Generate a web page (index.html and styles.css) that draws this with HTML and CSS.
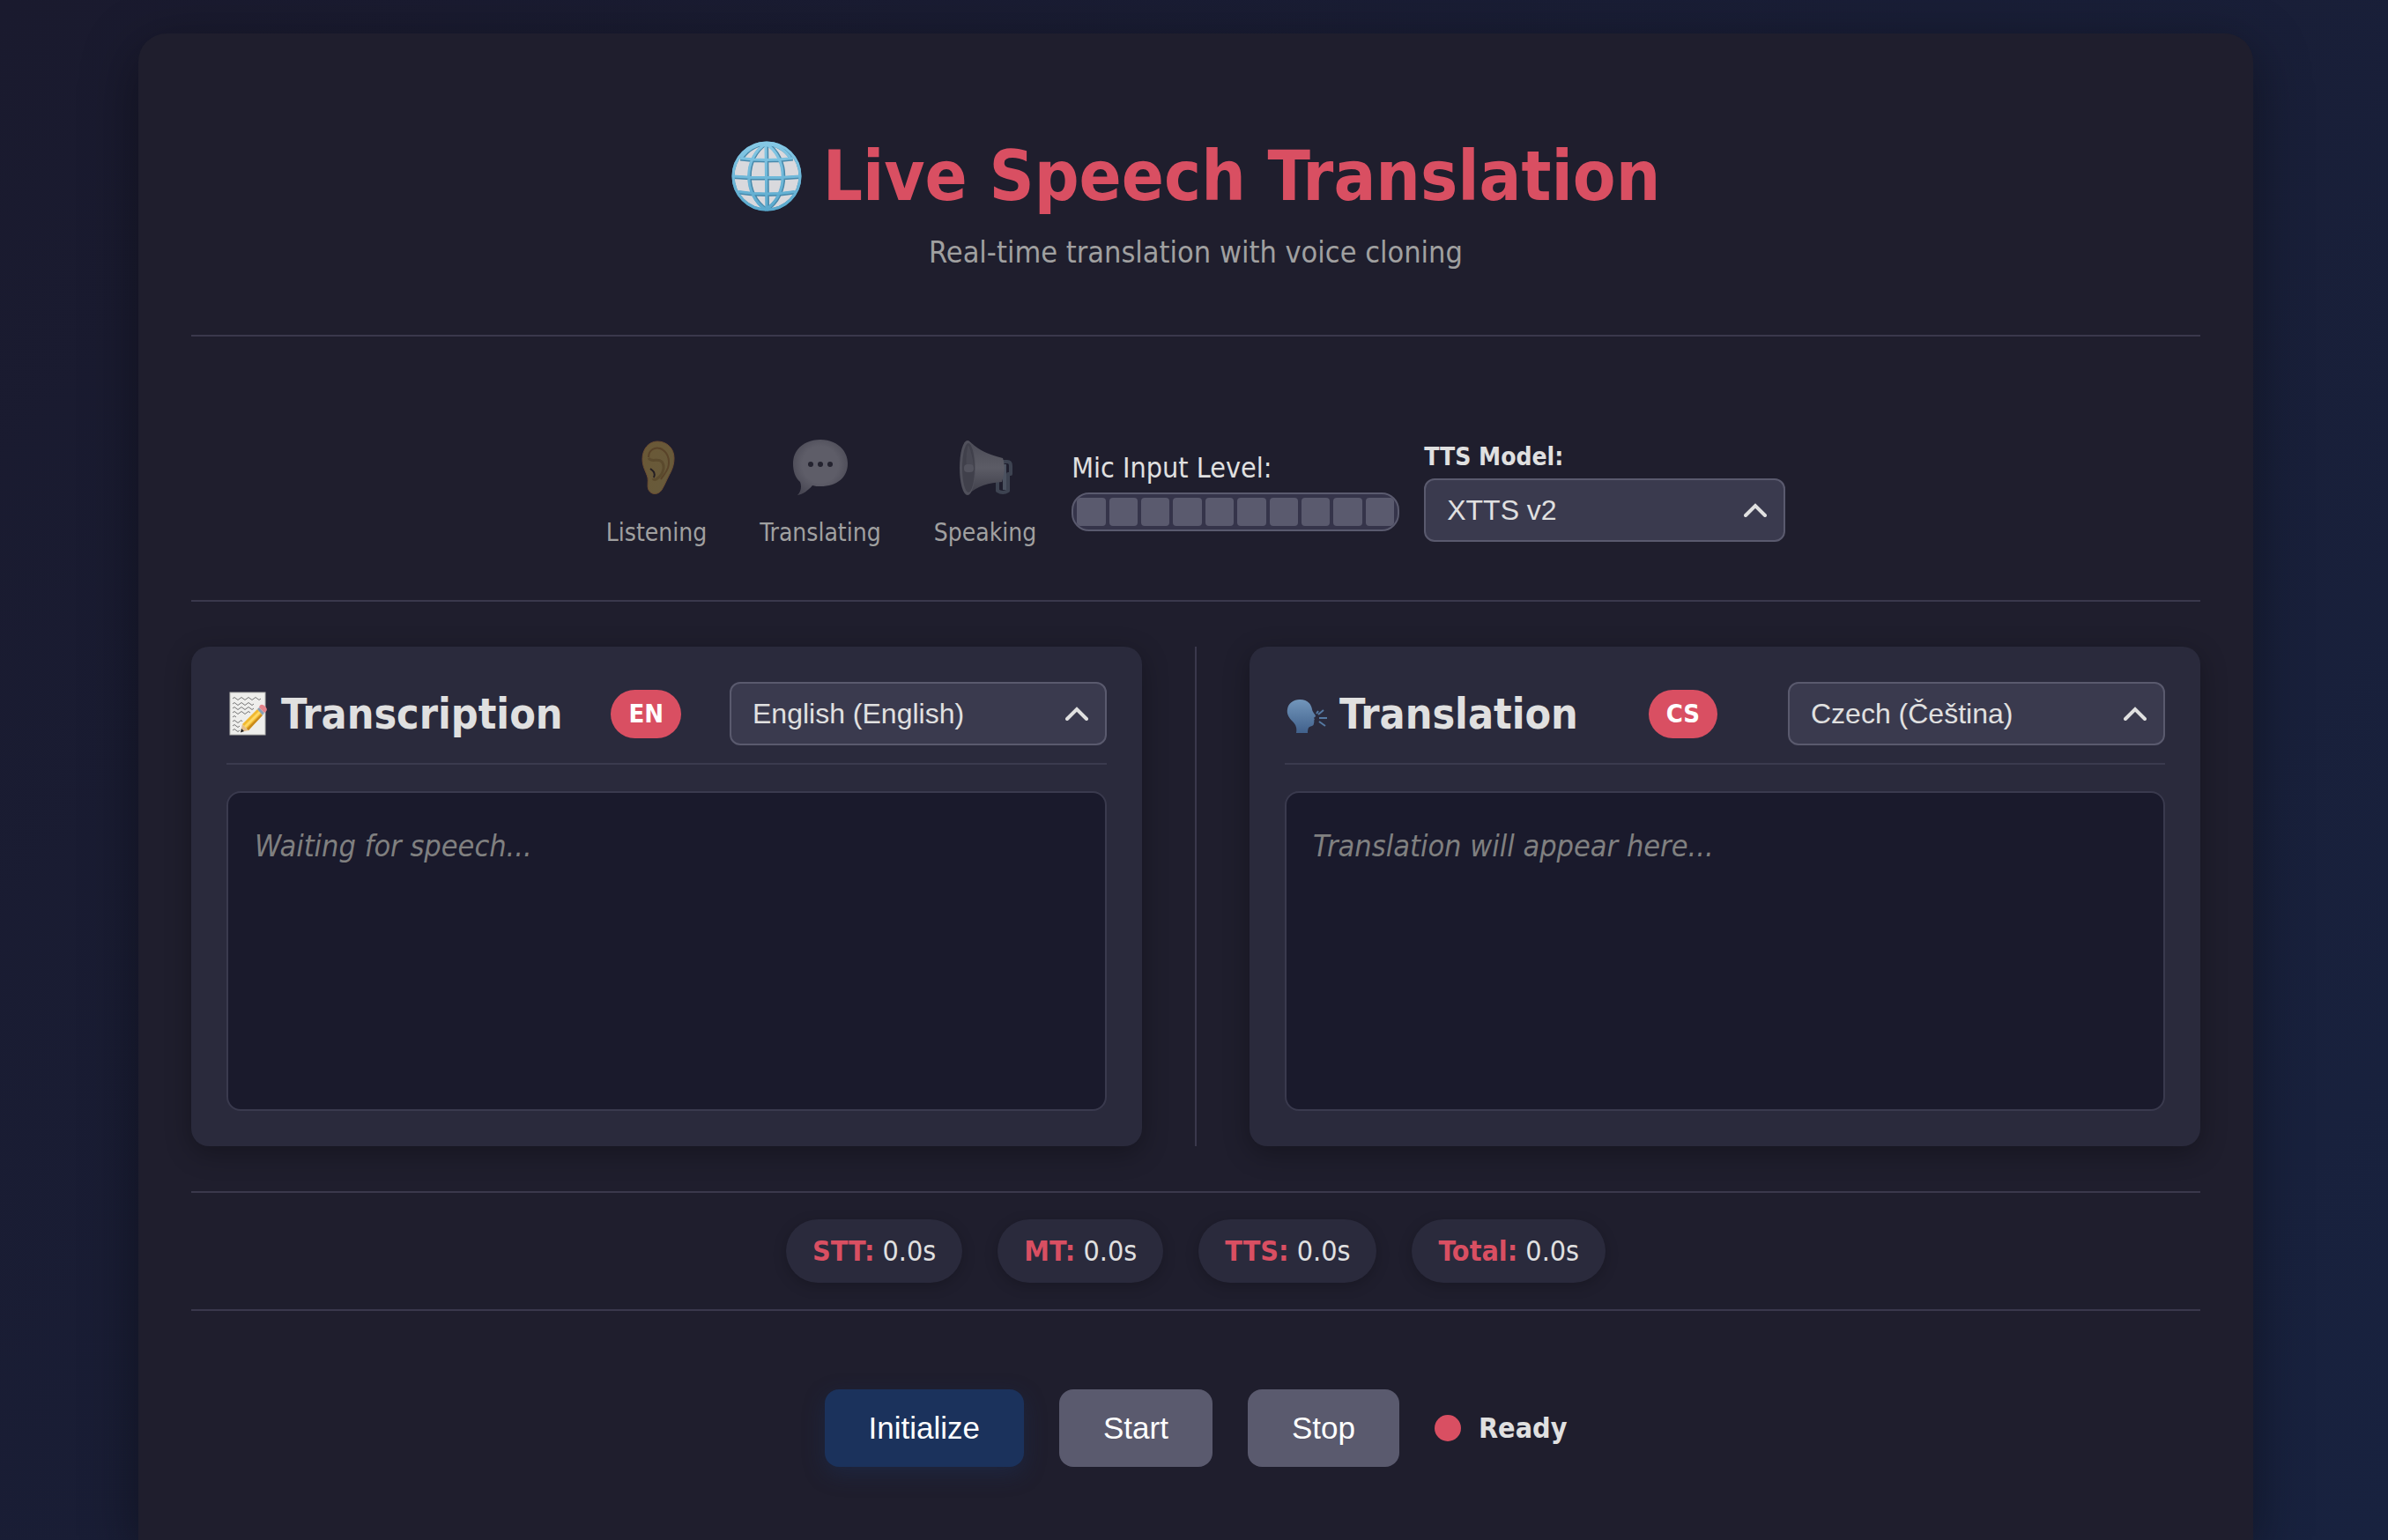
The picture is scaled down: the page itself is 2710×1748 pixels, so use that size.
FILE: index.html
```html
<!DOCTYPE html>
<html lang="en">
<head>
<meta charset="utf-8">
<title>Live Speech Translation</title>
<link rel="stylesheet" href="styles.css">
</head>
<body>
<div class="container">
  <header class="header">
    <h1 class="title">
      <svg class="icon-globe" viewBox="0 0 78 78" aria-hidden="true">
        <defs>
          <linearGradient id="globeLine" x1="0" y1="0" x2="0" y2="1"><stop offset="0" stop-color="#86c9e6"/><stop offset="1" stop-color="#5aa9cd"/></linearGradient>
        </defs>
        <circle cx="39" cy="39" r="37" fill="#d9d9dd"/>
        <g fill="none" stroke="#4789ab" stroke-width="4">
          <circle cx="39" cy="39" r="37" stroke-width="3"/>
          <path d="M39 2L40 76M39 3C14 18 14 60 39 76M39 3C64 18 64 60 39 76M2 40Q39 43 76 40M10 20Q39 24 68 20M8 57Q39 62 70 57M12 19C19 9 28 4 39 3M66 19C59 9 50 4 39 3"/>
        </g>
        <g fill="none" stroke="url(#globeLine)" stroke-width="3">
          <circle cx="39" cy="39" r="37" stroke-width="3"/>
          <path d="M38 2L39 76M38 3C13 18 13 60 38 76M38 3C63 18 63 60 38 76M2 39Q39 42 76 39M10 19Q39 23 68 19M8 56Q39 61 70 56M11 18C18 9 28 4 38 3M65 18C58 9 50 4 38 3"/>
        </g>
      </svg>
      <span>Live Speech Translation</span>
    </h1>
    <p class="subtitle">Real-time translation with voice cloning</p>
  </header>

  <section class="status-row">
    <div class="stages">
      <div class="stage">
        <svg class="stage-icon" viewBox="0 0 72 72" aria-hidden="true">
          <defs><linearGradient id="ear" x1="0" y1="0" x2="1" y2="1"><stop offset="0" stop-color="#6a5836"/><stop offset="1" stop-color="#675b3c"/></linearGradient></defs>
          <path d="M37 6C27 6 20 15 20 26C20 35 24 40 26 47C27 52 25 57 27 61C30 67 38 67 42 61C45 56 47 51 50 45C54 38 56 32 56 25C56 14 48 6 37 6Z" fill="url(#ear)" stroke="#6b4d32" stroke-width="1"/>
          <path d="M27 24C27 16 34 12 40 14C48 17 52 26 49 36C47 42 43 45 41 49" fill="none" stroke="#594329" stroke-width="2"/>
          <path d="M27 25C31 31 37 24 42 29C46 34 44 43 37 48C35 50 33 50 32 48" fill="none" stroke="#5b4a2d" stroke-width="3"/>
          <path d="M29 37C33 40 35 42 33 47" fill="none" stroke="#231e23" stroke-width="2"/>
        </svg>
        <span class="stage-label">Listening</span>
      </div>
      <div class="stage">
        <svg class="stage-icon" viewBox="0 0 72 72" aria-hidden="true">
          <defs><radialGradient id="bubble" cx=".5" cy=".45" r=".6"><stop offset=".55" stop-color="#5e5d68"/><stop offset="1" stop-color="#484753"/></radialGradient></defs>
          <path d="M36 4C54 4 67 16 67 31C67 47 55 57 36 57C33 57 30 57 27 56C22 62 16 66 10 67C14 63 15 57 13 52C7 47 5 39 5 31C5 15 18 4 36 4Z" fill="url(#bubble)"/>
          <g fill="#24232f"><circle cx="25" cy="32" r="3"/><circle cx="36" cy="32" r="3"/><circle cx="47" cy="32" r="3"/></g>
        </svg>
        <span class="stage-label">Translating</span>
      </div>
      <div class="stage">
        <svg class="stage-icon" viewBox="0 0 72 72" aria-hidden="true">
          <defs><linearGradient id="horn" x1="0" y1="0" x2="0" y2="1"><stop offset="0" stop-color="#4b4b56"/><stop offset=".5" stop-color="#5c5c66"/><stop offset="1" stop-color="#3d3d48"/></linearGradient></defs>
          <path d="M54 29H61Q65 29 65 34V43H62V62Q56 66 50 62V49" fill="none" stroke="#3d4351" stroke-width="4" stroke-linejoin="round"/>
          <path d="M58 32V61" stroke="#4b5260" stroke-width="4"/>
          <path d="M16 5C24 9 27 18 56 25C59 34 58 43 55 52C41 53 27 56 16 67Z" fill="url(#horn)"/>
          <ellipse cx="16" cy="36" rx="9" ry="31" fill="#50505b"/>
          <ellipse cx="17" cy="36" rx="7" ry="28" fill="#40404b"/>
          <path d="M17 10C21 20 22 27 23 34L15 35C14 25 15 16 17 10Z" fill="#484853"/>
          <rect x="12" y="32" width="11" height="9" rx="4" fill="#53535e"/>
        </svg>
        <span class="stage-label">Speaking</span>
      </div>
    </div>
    <div class="mic">
      <span class="mic-label" id="mic-label">Mic Input Level:</span>
      <div class="mic-bar" role="meter" aria-labelledby="mic-label" aria-valuemin="0" aria-valuemax="10" aria-valuenow="0">
        <i></i><i></i><i></i><i></i><i></i><i></i><i></i><i></i><i></i><i></i>
      </div>
    </div>
    <div class="model">
      <label class="model-label" for="tts-model">TTS Model:</label>
      <div class="select select-model">
        <select id="tts-model"><option>XTTS v2</option></select>
        <svg class="chevron" viewBox="0 0 26 16" aria-hidden="true"><path d="M2 14L13 3L24 14"/></svg>
      </div>
    </div>
  </section>

  <main class="panels">
    <section class="panel">
      <div class="panel-head">
        <h2 class="panel-title">
          <svg class="panel-icon" viewBox="0 0 50 50" aria-hidden="true">
            <rect x="4" y="1" width="40" height="48" fill="#eeeeec" stroke="#b5b5b2"/>
            <path d="M7 8q2-3 4 0t4 0t4 0t4 0t4 0t4 0t4 0t4 0M7 14q2-3 4 0t4 0t4 0t4 0t4 0t4 0M7 19q2-3 4 0t4 0t4 0t4 0t4 0t4 0M7 24q2-3 4 0t4 0t4 0t4 0t4 0M7 29q2-3 4 0M7 34q2-3 4 0t4 0t3 0M7 39q2-3 4 0t4 0M7 44q2-3 4 0t4 0" fill="none" stroke="#777" stroke-width="1"/>
            <path d="M16 46L18 37L25 44Z" fill="#e3bd8b"/><path d="M16 46.500L17 42L20 45Z" fill="#222"/>
            <path d="M18 37L35 20L41 26L25 44Z" fill="#f1b931"/><path d="M20 39L37 22L39 24L22 41Z" fill="#ffd966"/>
            <path d="M23 42L39 26L41 27L25 44Z" fill="#c98a1c"/>
            <path d="M35 20L37 18L43 24L41 27Z" fill="#8ba0b4"/>
            <path d="M37 18C38 14 41 14 44 17C47 20 46 22 43 24Z" fill="#e4848c"/>
          </svg>
          <span>Transcription</span>
        </h2>
        <span class="badge">EN</span>
        <div class="select select-lang">
          <select aria-label="Source language"><option>English (English)</option></select>
          <svg class="chevron" viewBox="0 0 26 16" aria-hidden="true"><path d="M2 14L13 3L24 14"/></svg>
        </div>
      </div>
      <div class="output"><p class="placeholder">Waiting for speech...</p></div>
    </section>
    <div class="divider"></div>
    <section class="panel">
      <div class="panel-head">
        <h2 class="panel-title">
          <svg class="panel-icon" viewBox="0 0 50 50" aria-hidden="true">
            <defs><linearGradient id="head" x1="0" y1="0" x2="0" y2="1"><stop offset="0" stop-color="#7296bb"/><stop offset="1" stop-color="#41618c"/></linearGradient></defs>
            <path d="M17 9C27 9 30 15 31 20C31 23 35 26 35 28C35 29 33 29 33 30C34 31 34 32 33 33C34 34 33 35 33 36C33 40 28 39 27 41C26 43 26 45 26 47H13C14 42 13 38 9 34C4 29 2 25 3 20C4 13 10 9 17 9Z" fill="url(#head)"/>
            <path d="M38 26L44 21M39 30H48M39 34L46 39M36 25L38 22" fill="none" stroke="#5579a2" stroke-width="2"/>
          </svg>
          <span>Translation</span>
        </h2>
        <span class="badge">CS</span>
        <div class="select select-lang">
          <select aria-label="Target language"><option>Czech (Čeština)</option></select>
          <svg class="chevron" viewBox="0 0 26 16" aria-hidden="true"><path d="M2 14L13 3L24 14"/></svg>
        </div>
      </div>
      <div class="output"><p class="placeholder">Translation will appear here...</p></div>
    </section>
  </main>

  <section class="stats">
    <span class="stat"><b>STT:</b> 0.0s</span>
    <span class="stat"><b>MT:</b> 0.0s</span>
    <span class="stat"><b>TTS:</b> 0.0s</span>
    <span class="stat"><b>Total:</b> 0.0s</span>
  </section>

  <footer class="controls">
    <button class="btn btn-primary" type="button">Initialize</button>
    <button class="btn" type="button">Start</button>
    <button class="btn" type="button">Stop</button>
    <div class="ready"><span class="dot"></span><span>Ready</span></div>
  </footer>
</div>
</body>
</html>
```
FILE: styles.css
```css
* { box-sizing: border-box; margin: 0; padding: 0; }

body {
  display: flex;
  flex-direction: column;
  min-height: 100vh;
  padding: 38px 153px 0 157px;
  font-family: "DejaVu Sans Condensed", "DejaVu Sans", sans-serif;
  font-size: 32px;
  color: #e0e0e0;
  background: linear-gradient(135deg, #1a1a2e 0%, #18223f 100%);
}

.container {
  flex: 1;
  padding: 60px;
  background: #1f1e2d;
  border-radius: 32px 32px 0 0;
  box-shadow: 0 16px 64px rgba(0, 0, 0, 0.4);
}

.header {
  padding: 52px 0 72px;
  text-align: center;
  border-bottom: 2px solid #3a384c;
}
.title {
  display: flex;
  justify-content: center;
  align-items: center;
  gap: 24px;
  font-size: 79px;
  line-height: 100px;
  color: #d94f62;
}
.icon-globe { width: 80px; height: 80px; }
.subtitle {
  margin-top: 14px;
  font-size: 34px;
  line-height: 44px;
  color: #a0a0a0;
}

.status-row {
  display: flex;
  justify-content: center;
  align-items: center;
  padding: 113px 0 58px;
  border-bottom: 2px solid #3a384c;
}
.stages { display: flex; gap: 60px; margin-right: 40px; }
.stage { display: flex; flex-direction: column; align-items: center; gap: 20px; }
.stage-icon { width: 72px; height: 72px; }
.stage-label { font-size: 28px; line-height: 36px; color: #a0a0a0; }
.mic { display: flex; flex-direction: column; gap: 12px; margin-right: 28px; }
.mic-label { line-height: 32px; }
.mic-bar {
  display: flex;
  gap: 4px;
  width: 372px;
  height: 44px;
  padding: 4px;
  overflow: hidden;
  background: #35344a;
  border: 2px solid #5a5a6e;
  border-radius: 20px;
}
.mic-bar i { flex: 1; background: #5a5a6e; border-radius: 4px; }
.model { display: flex; flex-direction: column; gap: 8px; }
.model-label { font-size: 28px; font-weight: bold; line-height: 32px; }

.select { position: relative; }
.select-model { width: 410px; }
.select-lang { width: 428px; }
.select select {
  display: block;
  width: 100%;
  height: 72px;
  padding: 0 60px 0 24px;
  appearance: none;
  font: 32px "Liberation Sans", Arial, sans-serif;
  color: #e0e0e0;
  background: #3a3a4e;
  border: 2px solid #5a5a6e;
  border-radius: 12px;
}
.chevron {
  position: absolute;
  top: 28px;
  right: 21px;
  width: 26px;
  height: 16px;
  fill: none;
  stroke: #e0e0e0;
  stroke-width: 4;
  stroke-linecap: round;
  pointer-events: none;
}

.panels {
  display: grid;
  grid-template-columns: 1fr 2px 1fr;
  column-gap: 60px;
  margin: 51px 0;
}
.divider { background: #3a384c; }
.panel {
  padding: 40px;
  background: #2a2a3c;
  border-radius: 20px;
  box-shadow: 0 8px 30px rgba(0, 0, 0, 0.3);
}
.panel-head {
  display: flex;
  justify-content: space-between;
  align-items: center;
  padding-bottom: 20px;
  border-bottom: 2px solid #3a3a4e;
}
.panel-title {
  display: flex;
  align-items: center;
  gap: 12px;
  font-size: 48px;
  line-height: 60px;
}
.panel-icon { width: 50px; height: 50px; }
.badge {
  padding: 0 20px;
  font-size: 29px;
  font-weight: bold;
  line-height: 55px;
  color: #fff;
  background: #d94f62;
  border-radius: 28px;
}
.output {
  min-height: 363px;
  margin-top: 30px;
  padding: 30px;
  background: #1a1a2c;
  border: 2px solid #3a3a4e;
  border-radius: 16px;
}
.placeholder { font-size: 34px; font-style: italic; line-height: 60px; color: #808080; }

.stats {
  display: flex;
  justify-content: center;
  gap: 40px;
  padding: 30px 0;
  border-top: 2px solid #3a384c;
  border-bottom: 2px solid #3a384c;
}
.stat {
  padding: 0 30px;
  line-height: 72px;
  background: #2a2a3c;
  border-radius: 36px;
  box-shadow: 0 4px 16px rgba(0, 0, 0, 0.2);
}
.stat b { color: #d94f62; }

.controls {
  display: flex;
  justify-content: center;
  align-items: center;
  gap: 40px;
  padding-top: 89px;
}
.btn {
  height: 88px;
  padding: 0 50px;
  font: 35px "Liberation Sans", Arial, sans-serif;
  color: #fff;
  background: #5a5a6e;
  border: 0;
  border-radius: 16px;
}
.btn-primary { background: #1b325c; box-shadow: 0 8px 24px rgba(27, 50, 92, 0.4); }
.ready { display: flex; align-items: center; gap: 20px; font-weight: bold; }
.dot { width: 30px; height: 30px; border-radius: 50%; background: #d94f62; }
```
